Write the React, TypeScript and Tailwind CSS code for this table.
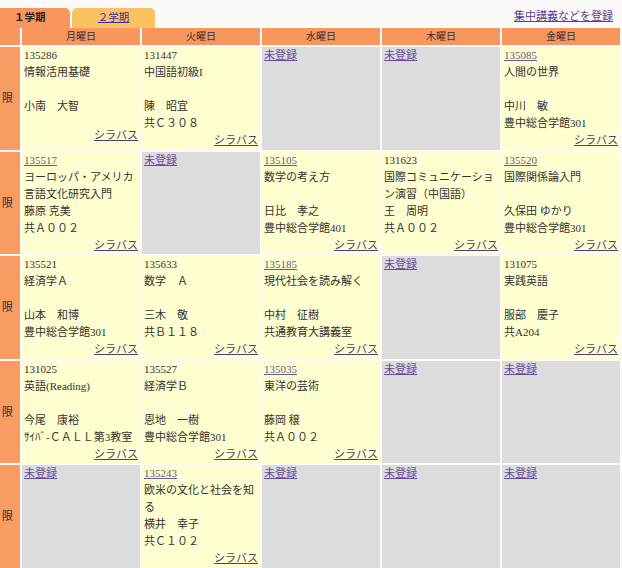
type Course = {
  code: string
  linked?: boolean
  name: string[]
  teacher: string
  room: string
  shortRoom?: boolean
}

type Slot = Course | null

const days = ['月曜日', '火曜日', '水曜日', '木曜日', '金曜日']

const timetable: Slot[][] = [
  [
    { code: '135286', name: ['情報活用基礎', ''], teacher: '小南　大智', room: '', shortRoom: true },
    { code: '131447', name: ['中国語初級I', ''], teacher: '陳　昭宜', room: '共Ｃ３０８' },
    null,
    null,
    { code: '135085', linked: true, name: ['人間の世界', ''], teacher: '中川　敏', room: '豊中総合学館301' },
  ],
  [
    { code: '135517', linked: true, name: ['ヨーロッパ・アメリカ', '言語文化研究入門'], teacher: '藤原 克美', room: '共Ａ００２' },
    null,
    { code: '135105', linked: true, name: ['数学の考え方', ''], teacher: '日比　孝之', room: '豊中総合学館401' },
    { code: '131623', name: ['国際コミュニケーショ', 'ン演習（中国語）'], teacher: '王　周明', room: '共Ａ００２' },
    { code: '135520', linked: true, name: ['国際関係論入門', ''], teacher: '久保田 ゆかり', room: '豊中総合学館301' },
  ],
  [
    { code: '135521', name: ['経済学Ａ', ''], teacher: '山本　和博', room: '豊中総合学館301' },
    { code: '135633', name: ['数学　Ａ', ''], teacher: '三木　敬', room: '共Ｂ１１８' },
    { code: '135185', linked: true, name: ['現代社会を読み解く', ''], teacher: '中村　征樹', room: '共通教育大講義室' },
    null,
    { code: '131075', name: ['実践英語', ''], teacher: '服部　慶子', room: '共A204' },
  ],
  [
    { code: '131025', name: ['英語(Reading)', ''], teacher: '今尾　康裕', room: 'ｻｲﾊﾞ-ＣＡＬＬ第3教室' },
    { code: '135527', name: ['経済学Ｂ', ''], teacher: '恩地　一樹', room: '豊中総合学館301' },
    { code: '135035', linked: true, name: ['東洋の芸術', ''], teacher: '藤岡 穣', room: '共Ａ００２' },
    null,
    null,
  ],
  [
    null,
    { code: '135243', linked: true, name: ['欧米の文化と社会を知', 'る'], teacher: '横井　幸子', room: '共Ｃ１０２' },
    null,
    null,
    null,
  ],
]

export default function App() {
  return (
    <div className="h-[568px] w-[622px] overflow-hidden bg-[#fdfafa] font-['Liberation_Serif','Noto_Sans_CJK_JP',serif] text-[11px] text-[#333]">
      {/* Term tabs + intensive course link */}
      <div className="flex h-[28px] items-end justify-between">
        <div className="flex items-end gap-[2px]">
          <div className="h-[20px] w-[70px] rounded-tr-[5px] bg-[#f9965e] pl-[14px] text-[10.5px] font-bold leading-[20px] text-[#222]">
            １学期
          </div>
          <div className="h-[20px] w-[83px] rounded-t-[5px] bg-[#fcc262] text-center text-[10.5px] leading-[20px]">
            <a className="text-[#3a2f9a] underline">２学期</a>
          </div>
        </div>
        <a className="mb-[4px] mr-[9px] text-[#5b3e8f] underline">集中講義などを登録</a>
      </div>

      {/* Weekly grid */}
      <div className="grid grid-cols-[20px_repeat(5,118px)] grid-rows-[17px_repeat(5,102.5px)] gap-[2px]">
        <div className="bg-[#f9965e]" />
        {days.map((d) => (
          <div key={d} className="bg-[#f9965e] text-center text-[10px] leading-[17px] text-[#333]">
            {d}
          </div>
        ))}
        {timetable.map((row, i) => (
          <PeriodRow key={i} slots={row} />
        ))}
      </div>
    </div>
  )
}

// period number is scrolled off the left edge in the original, only 限 shows
function PeriodRow({ slots }: { slots: Slot[] }) {
  return (
    <>
      <div className="flex items-center bg-[#f99c64] pl-[2px]">
        <span>限</span>
      </div>
      {slots.map((slot, j) =>
        slot ? <CourseCell key={j} course={slot} /> : <EmptyCell key={j} />
      )}
    </>
  )
}

function EmptyCell() {
  return (
    <div className="bg-[#dddcdd] px-[2px] leading-[17px]">
      <a className="text-[#6a4c9c] underline">未登録</a>
    </div>
  )
}

function CourseCell({ course }: { course: Course }) {
  return (
    <div className="flex flex-col bg-[#fefed0] px-[2px] whitespace-nowrap">
      <div className="h-[17px] leading-[17px]">
        {course.linked ? (
          <a className="text-[#6a5a86] underline">{course.code}</a>
        ) : (
          <span className="text-[#333]">{course.code}</span>
        )}
      </div>
      {course.name.map((line, k) => (
        <div key={k} className="h-[17px] leading-[17px]">
          {line}
        </div>
      ))}
      <div className="h-[17px] leading-[17px]">{course.teacher}</div>
      <div className={course.shortRoom ? 'h-[12px]' : 'h-[17px] leading-[17px]'}>{course.room}</div>
      <div className="h-[17px] text-right leading-[17px]">
        <a className="text-[#4b4170] underline">シラバス</a>
      </div>
    </div>
  )
}
